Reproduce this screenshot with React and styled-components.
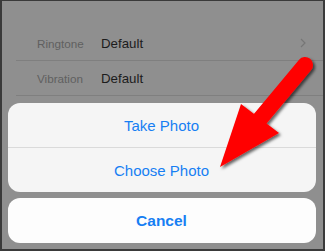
import React from "react";
import styled, { createGlobalStyle } from "styled-components";

const Global = createGlobalStyle`
  html, body { margin: 0; padding: 0; background: #8f8f8f; }
  body { font-family: "Liberation Sans", Arial, sans-serif; }
`;

const Page = styled.div`
  position: relative;
  width: 325px;
  height: 251px;
`;

const Frame = styled.div`
  box-sizing: border-box;
  width: 325px;
  height: 251px;
  background: #8f8f8f;
  border-style: solid;
  border-color: #3a3a3a;
  border-width: 1px 2px 2px 2px;
  padding-top: 25px;
  display: flex;
  flex-direction: column;
`;

const SettingsList = styled.div`
  display: flex;
  flex-direction: column;
  padding-left: 14px;
`;

const Row = styled.div`
  height: 35px;
  box-sizing: border-box;
  border-bottom: 1px solid #7f7f7f;
  display: flex;
  align-items: center;
  padding-left: 21px;
  padding-right: 14px;
`;

const Label = styled.span`
  width: 64px;
  font-size: 11.7px;
  color: #606060;
`;

const Value = styled.span`
  flex: 1;
  font-size: 13.3px;
  color: #1c1c1c;
`;

const Chevron = styled.svg`
  width: 6px;
  height: 10px;
  margin-right: 3px;
`;

const Sheet = styled.div`
  display: flex;
  flex-direction: column;
  gap: 6px;
  padding: 7px 7px 0 6px;
`;

const Group = styled.div`
  border-radius: 12px;
  overflow: hidden;
  background: ${(p) => (p.$cancel ? "#fdfdfd" : "#f5f5f5")};
  display: flex;
  flex-direction: column;
`;

const Action = styled.div`
  height: ${(p) => (p.$cancel ? "45px" : "44px")};
  display: flex;
  align-items: center;
  justify-content: center;
  font-size: ${(p) => (p.$cancel ? "15.5px" : "15px")};
  font-weight: ${(p) => (p.$cancel ? 700 : 400)};
  color: #177ff3;
  padding-right: 1px;
  & + & {
    border-top: 1px solid #dadada;
  }
`;

const Overlay = styled.svg`
  position: absolute;
  left: 0;
  top: 0;
  width: 325px;
  height: 251px;
  pointer-events: none;
`;

export default function App() {
  return (
    <Page>
      <Global />
      <Frame>
        <SettingsList>
          <Row>
            <Label>Ringtone</Label>
            <Value>Default</Value>
            <Chevron viewBox="0 0 6 10">
              <path d="M1 1 L5 5 L1 9" fill="none" stroke="#767676" strokeWidth="1.2" />
            </Chevron>
          </Row>
          <Row>
            <Label>Vibration</Label>
            <Value>Default</Value>
          </Row>
        </SettingsList>
        <Sheet>
          <Group>
            <Action>Take Photo</Action>
            <Action>Choose Photo</Action>
          </Group>
          <Group $cancel>
            <Action $cancel>Cancel</Action>
          </Group>
        </Sheet>
      </Frame>
      <Overlay viewBox="0 0 325 251">
        <defs>
          <filter id="sh" x="-20%" y="-20%" width="150%" height="150%">
            <feDropShadow dx="2" dy="2" stdDeviation="1.6" floodColor="#000" floodOpacity="0.6" />
          </filter>
        </defs>
        <g filter="url(#sh)" fill="#ff0000">
          <line x1="305" y1="65" x2="255" y2="125" stroke="#ff0000" strokeWidth="16" strokeLinecap="round" />
          <polygon points="241,104 279,133 220,167" />
        </g>
      </Overlay>
    </Page>
  );
}
